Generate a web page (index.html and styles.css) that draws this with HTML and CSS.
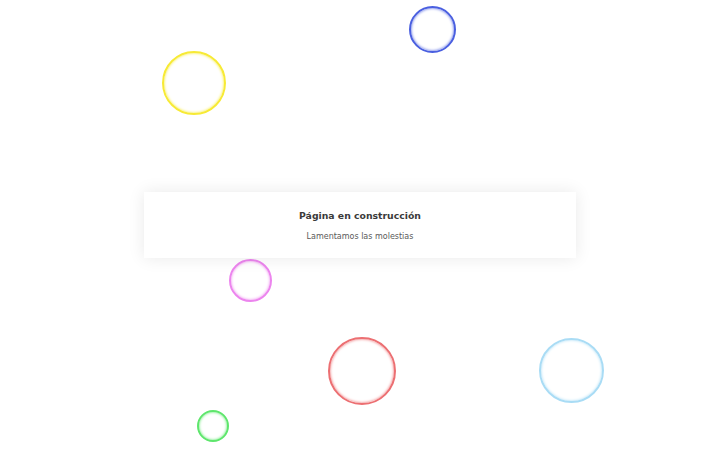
FILE: index.html
```html
<!DOCTYPE html>
<html lang="es">
<head>
<meta charset="utf-8">
<title>Página en construcción</title>
<link rel="stylesheet" href="styles.css">
</head>
<body>
<div class="bubbles">
  <span class="bubble blue"></span>
  <span class="bubble yellow"></span>
  <span class="bubble violet"></span>
  <span class="bubble red"></span>
  <span class="bubble sky"></span>
  <span class="bubble green"></span>
</div>
<main class="card">
  <h1 class="title">Página en construcción</h1>
  <p class="subtitle">Lamentamos las molestias</p>
</main>
</body>
</html>
```
FILE: styles.css
```css
html, body {
  margin: 0;
  padding: 0;
  height: 100%;
}
body {
  background: #ffffff;
  font-family: "DejaVu Sans", "Liberation Sans", sans-serif;
  display: flex;
  align-items: center;
  justify-content: center;
  overflow: hidden;
  position: relative;
}
.bubbles {
  position: absolute;
  inset: 0;
  z-index: 0;
}
.bubble {
  position: absolute;
  border-radius: 50%;
  box-sizing: border-box;
  border: 2px solid currentColor;
  box-shadow: inset 0 0 3px currentColor;
}
.blue   { color: #4a5fe0; left: 409px; top: 6px;   width: 47px; height: 47px; }
.yellow { color: #f7ea35; left: 162px; top: 51px;  width: 64px; height: 64px; }
.violet { color: #ec85ee; left: 229px; top: 259px; width: 43px; height: 43px; }
.red    { color: #ec6f72; left: 328px; top: 337px; width: 68px; height: 68px; }
.sky    { color: #a9dcf5; left: 539px; top: 338px; width: 65px; height: 65px; }
.green  { color: #5ee66c; left: 197px; top: 410px; width: 32px; height: 32px; }
.card {
  position: relative;
  z-index: 1;
  width: 432px;
  box-sizing: border-box;
  padding: 18px 0 16px;
  background: #ffffff;
  text-align: center;
  box-shadow: 0 0 16px rgba(0, 0, 0, 0.09);
}
.title {
  margin: 0 0 10px;
  font-size: 9.3px;
  line-height: 12px;
  font-weight: bold;
  color: #3a3a3a;
}
.subtitle {
  margin: 0;
  font-size: 8px;
  line-height: 10px;
  color: #5a5a5a;
}
```
